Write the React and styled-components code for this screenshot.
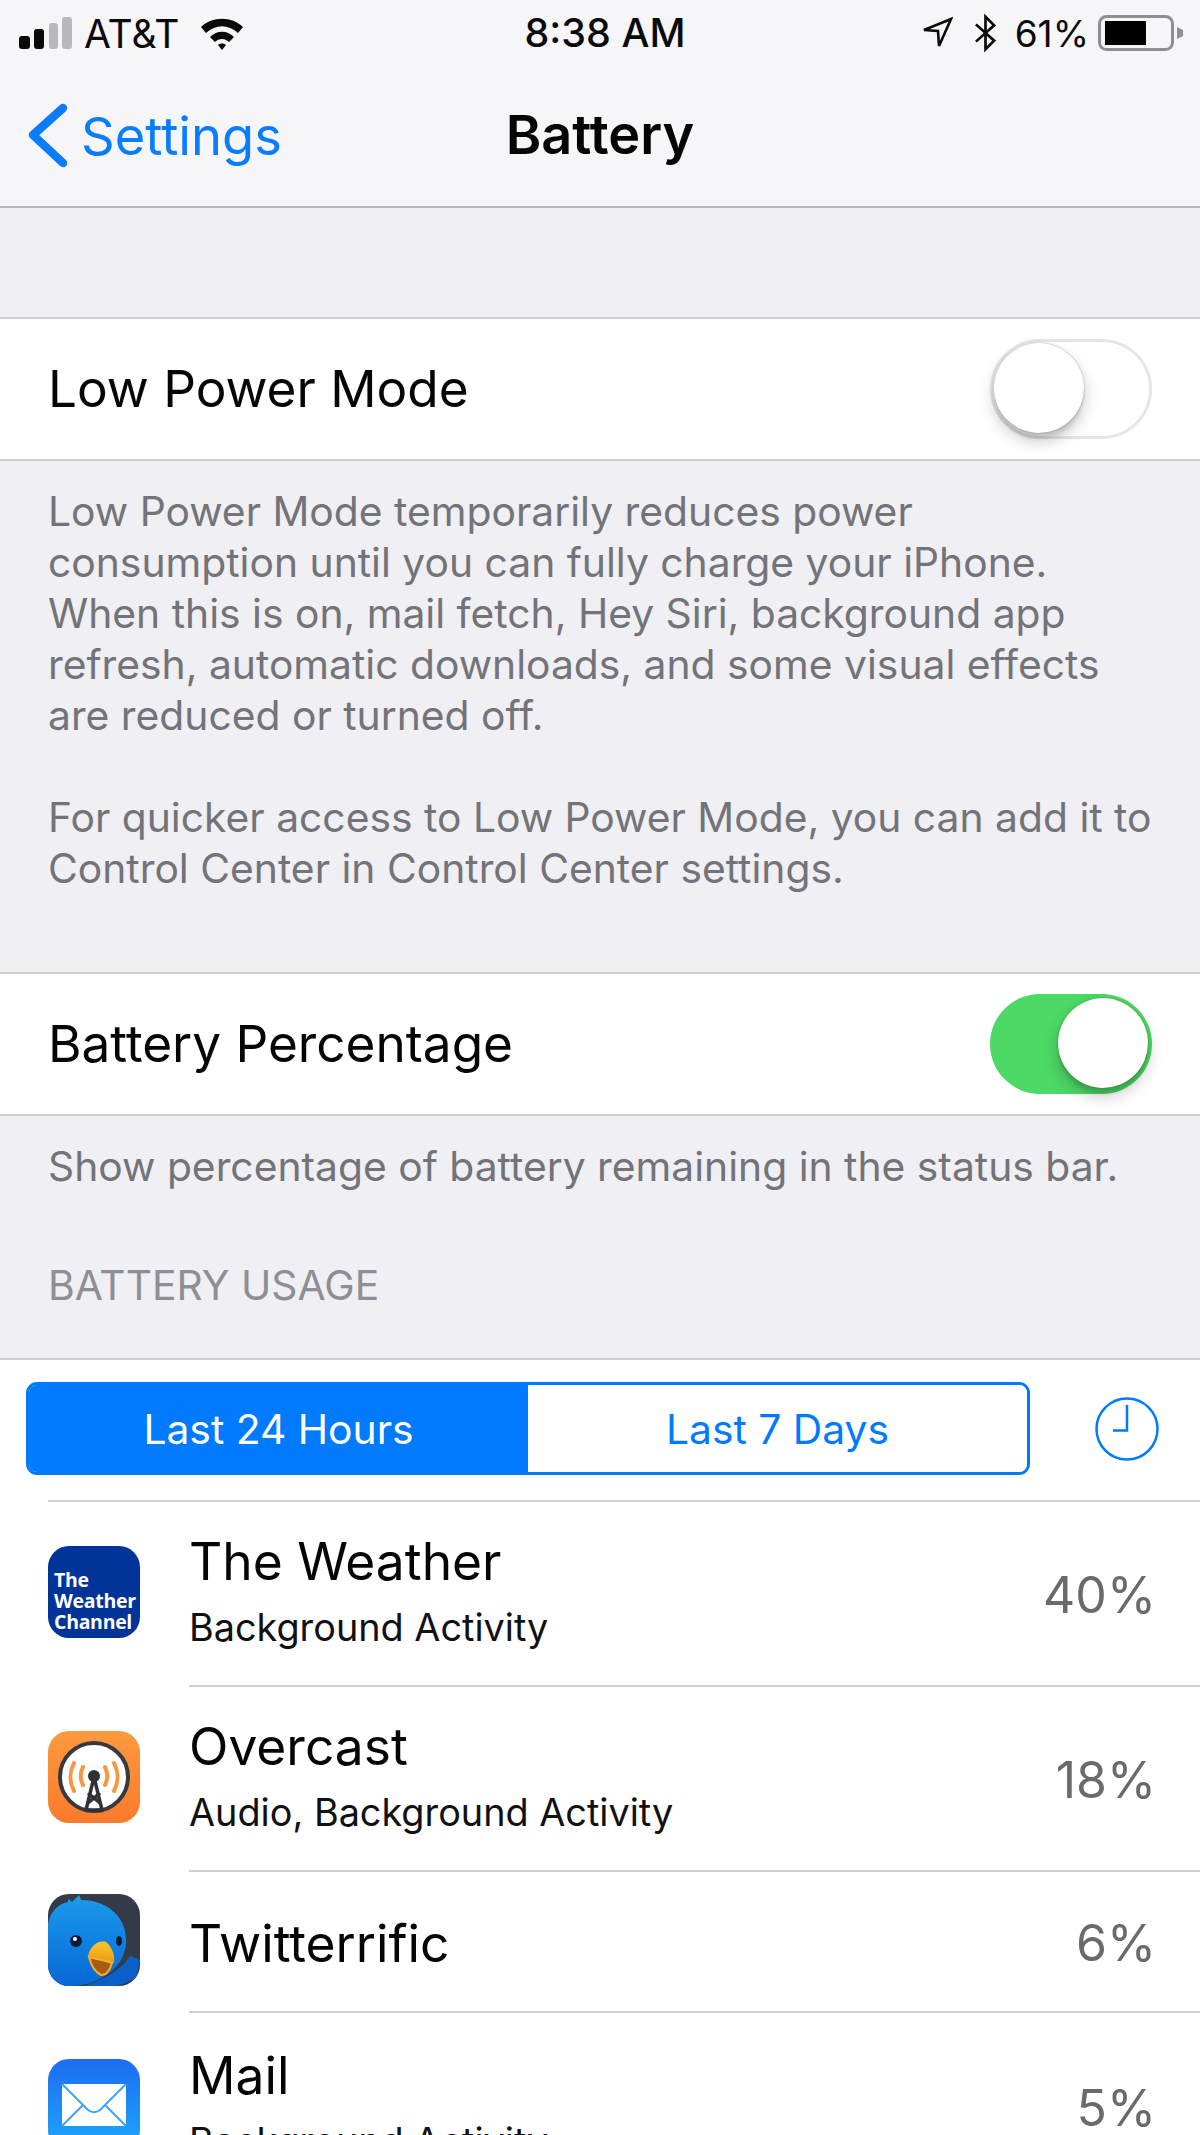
import React from 'react';
import styled, { createGlobalStyle } from 'styled-components';

const GlobalStyle = createGlobalStyle`
  html, body {
    margin: 0;
    padding: 0;
    background: #efeff4;
  }
  body {
    font-family: Inter, "Noto Sans", "Liberation Sans", sans-serif;
    -webkit-font-smoothing: antialiased;
  }
`;

const Page = styled.div`
  width: 1200px;
  height: 2135px;
  overflow: hidden;
  background: #efeff4;
`;

const Header = styled.header`
  height: 206px;
  background: #f6f6f8;
  border-bottom: 2px solid #b8b8bc;
`;

const StatusBar = styled.div`
  height: 66px;
  display: flex;
  align-items: center;
  justify-content: space-between;
  padding: 0 17px 0 19px;
  position: relative;
`;

const StatusSide = styled.div`
  display: flex;
  align-items: center;
  gap: ${p => p.$gap || 0}px;
`;

const StatusText = styled.span`
  font-size: ${p => p.$size}px;
  color: #0a0a0a;
`;

const Clock = styled.span`
  position: absolute;
  left: 10px;
  right: 0;
  text-align: center;
  font-size: 39.5px;
  font-weight: 500;
  color: #0a0a0a;
`;

const NavBar = styled.div`
  height: 140px;
  display: flex;
  align-items: center;
  padding-left: 23px;
  position: relative;
`;

const BackLink = styled.div`
  display: flex;
  align-items: center;
  gap: 12px;
  color: #0a7cff;
  font-size: 52.5px;
`;

const NavTitle = styled.div`
  position: absolute;
  left: 0;
  right: 0;
  top: 36px;
  text-align: center;
  font-size: 54px;
  font-weight: 600;
  color: #050505;
`;

const Group = styled.div`
  background: #fff;
  border-top: 2px solid #cfcfd3;
  border-bottom: 2px solid #cfcfd3;
  margin-top: ${p => p.$top}px;
`;

const Row = styled.div`
  height: 140px;
  display: flex;
  align-items: center;
  justify-content: space-between;
  padding: 0 48px;
`;

const RowLabel = styled.span`
  font-size: 51.3px;
  color: #050505;
  margin-bottom: 3px;
`;

const Track = styled.div`
  width: 162px;
  height: 100px;
  box-sizing: border-box;
  border-radius: 50px;
  position: relative;
  background: ${p => (p.$on ? '#4cd964' : '#fff')};
  border: ${p => (p.$on ? 'none' : '3px solid #e6e6e6')};
`;

const Knob = styled.div`
  position: absolute;
  top: ${p => (p.$on ? 4 : 1)}px;
  ${p => (p.$on ? 'right: 4px;' : 'left: 1px;')}
  width: 90px;
  height: 90px;
  border-radius: 50%;
  background: #fff;
  box-shadow: 0 0 2px rgba(0, 0, 0, 0.35), 0 8px 16px rgba(0, 0, 0, 0.22), 0 6px 3px rgba(0, 0, 0, 0.08);
`;

const Note = styled.div`
  padding: 25px 48px 0;
  font-size: 40.8px;
  line-height: 51px;
  color: #737378;
  white-space: nowrap;
`;

const NoteGap = styled.div`
  height: 51px;
`;

const SectionLabel = styled.div`
  padding: 0 48px;
  margin-top: 68px;
  font-size: 40.8px;
  line-height: 51px;
  color: #8e8e93;
`;

const Usage = styled.div`
  background: #fff;
  border-top: 2px solid #cfcfd3;
  margin-top: 47px;
  height: 800px;
`;

const SegmentBar = styled.div`
  display: flex;
  align-items: center;
  padding: 22px 0 0 26px;
`;

const Segments = styled.div`
  width: 1004px;
  height: 93px;
  box-sizing: border-box;
  display: flex;
  border: 3px solid #007aff;
  border-radius: 11px;
  overflow: hidden;
`;

const Segment = styled.div`
  flex: 1;
  display: flex;
  align-items: center;
  justify-content: center;
  font-size: 40.8px;
  background: ${p => (p.$active ? '#007aff' : '#fff')};
  color: ${p => (p.$active ? '#fff' : '#007aff')};
`;

const HistoryButton = styled.div`
  margin-left: 65px;
  display: flex;
`;

const AppRows = styled.div`
  margin: 25px 0 0 48px;
  border-top: 2px solid #cfcfd3;
`;

const AppRow = styled.div`
  height: ${p => p.$height}px;
  box-sizing: border-box;
  display: flex;
  align-items: center;
  padding-right: 44px;
  position: relative;
  &::after {
    content: '';
    position: absolute;
    left: 141px;
    right: 0;
    bottom: 0;
    height: 2px;
    background: #cfcfd3;
    display: ${p => (p.$last ? 'none' : 'block')};
  }
`;

const AppIcon = styled.div`
  width: 92px;
  height: 92px;
  border-radius: 21px;
  overflow: hidden;
  flex: none;
  display: flex;
  margin-bottom: 6px;
  background: ${p => p.$bg || 'transparent'};
`;

const WeatherLogo = styled.div`
  align-self: flex-end;
  padding: 0 0 6px 6px;
  font-family: "Open Sans", "Noto Sans", sans-serif;
  font-size: 19.5px;
  line-height: 21px;
  font-weight: 700;
  letter-spacing: -0.3px;
  color: #fff;
`;

const AppInfo = styled.div`
  flex: 1;
  margin-left: 49px;
`;

const AppName = styled.div`
  font-size: 51.5px;
  line-height: 60px;
  color: #050505;
`;

const AppDetail = styled.div`
  margin: 14px 0 9px;
  font-size: 37.8px;
  line-height: 44px;
  color: #111;
`;

const Percent = styled.div`
  font-size: 50px;
  color: #6a6a6e;
`;

const SignalIcon = () => (
  <svg width="53" height="34" viewBox="0 0 53 34">
    <rect x="0" y="20" width="11" height="13" rx="3" fill="#0a0a0a" />
    <rect x="15" y="13" width="10" height="20" rx="3" fill="#0a0a0a" />
    <rect x="30" y="7" width="9" height="26" rx="3" fill="#b9b9bb" />
    <rect x="43" y="1" width="10" height="32" rx="3" fill="#b9b9bb" />
  </svg>
);

const WifiIcon = () => (
  <svg width="44" height="34" viewBox="0 0 44 34">
    <path d="M1 11 C12 0 32 0 43 11 L38 17 C28 8 16 8 6 17Z" fill="#0a0a0a" />
    <path d="M10 21 C17 14 27 14 34 21 L29 26 C25 22 19 22 15 26Z" fill="#0a0a0a" />
    <path d="M18 29 C20 27 24 27 26 29 L22 34Z" fill="#0a0a0a" />
  </svg>
);

const LocationIcon = () => (
  <svg width="31" height="32" viewBox="0 0 31 32" fill="none">
    <path d="M2 13 L29 2 L17 29 L16 14Z" stroke="#0a0a0a" strokeWidth="2.6" strokeLinejoin="miter" />
  </svg>
);

const BluetoothIcon = () => (
  <svg width="23" height="38" viewBox="0 0 24 38" fill="none">
    <path d="M2 10 L21 27 L12 36 L12 2 L21 11 L2 28" stroke="#0a0a0a" strokeWidth="2.8" />
  </svg>
);

const BatteryIcon = () => (
  <svg width="85" height="36" viewBox="0 0 85 36">
    <rect x="1.5" y="1.5" width="73" height="33" rx="7" fill="none" stroke="#8f8f92" strokeWidth="3" />
    <rect x="7" y="6" width="41" height="24" fill="#000" />
    <path d="M79 12 L85 15 L85 21 L79 24Z" fill="#8f8f92" />
  </svg>
);

const BackChevron = () => (
  <svg width="46" height="68" viewBox="0 0 46 68" fill="none">
    <path d="M40 6 L10 33 L40 61" stroke="#0a7cff" strokeWidth="8.5" strokeLinecap="round" strokeLinejoin="round" />
  </svg>
);

const HistoryIcon = () => (
  <svg width="64" height="64" viewBox="0 0 64 64" fill="none">
    <circle cx="32" cy="32" r="30.5" stroke="#007aff" strokeWidth="2.5" />
    <path d="M32 8 V33.5 H18" stroke="#007aff" strokeWidth="2.5" />
  </svg>
);

const OvercastIcon = () => (
  <svg width="92" height="92" viewBox="0 0 92 92">
    <defs>
      <linearGradient id="overcastBg" x1="0" y1="0" x2="0" y2="1">
        <stop offset="0" stopColor="#fc9a3f" />
        <stop offset="1" stopColor="#fb7a2c" />
      </linearGradient>
    </defs>
    <rect width="92" height="92" fill="url(#overcastBg)" />
    <circle cx="46" cy="46" r="34" fill="#fff" stroke="#37393d" strokeWidth="4" />
    <path d="M26 32 C21 42 21 50 26 60 M66 32 C71 42 71 50 66 60" fill="none" stroke="#f8973f" strokeWidth="4" strokeLinecap="round" />
    <path d="M35 36 C32 42 32 48 35 54 M57 36 C60 42 60 48 57 54" fill="none" stroke="#f8973f" strokeWidth="4" strokeLinecap="round" />
    <path d="M46 46 L38 79 H54Z M40 72 L52 62 M52 72 L40 62" fill="none" stroke="#2f3136" strokeWidth="3.5" strokeLinejoin="round" />
    <circle cx="46" cy="45" r="6" fill="#2f3136" />
  </svg>
);

const BirdIcon = () => (
  <svg width="92" height="92" viewBox="0 0 92 92">
    <defs>
      <linearGradient id="birdBody" x1="0" y1="0" x2="0" y2="1">
        <stop offset="0" stopColor="#1a9bea" />
        <stop offset="1" stopColor="#0668d8" />
      </linearGradient>
      <linearGradient id="birdBeak" x1="0" y1="0" x2="0" y2="1">
        <stop offset="0" stopColor="#fbc52b" />
        <stop offset="1" stopColor="#ec9a12" />
      </linearGradient>
    </defs>
    <rect width="92" height="92" fill="#343a47" />
    <path d="M36 92 C50 88 72 78 82 62 L92 66 L88 84 L70 92Z" fill="#0a5fc8" />
    <path d="M20 5 L24 8 L31 1 L33 6 C60 6 80 24 78 50 C76 74 52 90 26 92 L0 92 L0 30 C2 18 10 10 20 8Z" fill="url(#birdBody)" />
    <circle cx="28" cy="47" r="6" fill="#0b1c3a" />
    <circle cx="27" cy="45" r="2" fill="#fff" />
    <ellipse cx="71" cy="47" rx="3" ry="5" fill="#0b1c3a" />
    <path d="M40 62 C42 52 50 46 58 48 C65 54 67 62 66 69 L40 62Z" fill="url(#birdBeak)" />
    <path d="M41 63 C48 65 58 67 64 69 C62 76 58 82 53 81 C47 78 43 71 41 63Z" fill="#a85b12" stroke="#f3b022" strokeWidth="2" />
  </svg>
);

const MailIcon = () => (
  <svg width="92" height="92" viewBox="0 0 92 92">
    <defs>
      <linearGradient id="mailBg" x1="0" y1="0" x2="0" y2="1">
        <stop offset="0" stopColor="#1d6cf2" />
        <stop offset="1" stopColor="#1ea9fb" />
      </linearGradient>
    </defs>
    <rect width="92" height="92" fill="url(#mailBg)" />
    <rect x="14" y="25" width="64" height="42" fill="#fff" />
    <path d="M14 25 L40 51 C44 54 48 54 52 51 L78 25 M14 67 L35 46 M78 67 L57 46" fill="none" stroke="#3fa3f3" strokeWidth="2" />
  </svg>
);

const apps = [
  { name: 'The Weather', detail: 'Background Activity', pct: '40%', height: 185, icon: <AppIcon $bg="#023399"><WeatherLogo>The<br />Weather<br />Channel</WeatherLogo></AppIcon> },
  { name: 'Overcast', detail: 'Audio, Background Activity', pct: '18%', height: 185, icon: <AppIcon><OvercastIcon /></AppIcon> },
  { name: 'Twitterrific', pct: '6%', height: 141, icon: <AppIcon><BirdIcon /></AppIcon> },
  { name: 'Mail', detail: 'Background Activity', pct: '5%', height: 190, last: true, icon: <AppIcon><MailIcon /></AppIcon> },
];

export default function App() {
  return (
    <Page>
      <GlobalStyle />
      <Header>
        <StatusBar>
          <StatusSide $gap={20}>
            <StatusSide $gap={12}>
              <SignalIcon />
              <StatusText $size={39}>AT&amp;T</StatusText>
            </StatusSide>
            <WifiIcon />
          </StatusSide>
          <Clock>8:38 AM</Clock>
          <StatusSide $gap={18}>
            <StatusSide $gap={21}>
              <LocationIcon />
              <BluetoothIcon />
            </StatusSide>
            <StatusSide $gap={9}>
              <StatusText $size={37}>61%</StatusText>
              <BatteryIcon />
            </StatusSide>
          </StatusSide>
        </StatusBar>
        <NavBar>
          <BackLink>
            <BackChevron />
            Settings
          </BackLink>
          <NavTitle>Battery</NavTitle>
        </NavBar>
      </Header>

      <Group $top={109}>
        <Row>
          <RowLabel>Low Power Mode</RowLabel>
          <Track><Knob /></Track>
        </Row>
      </Group>
      <Note>
        Low Power Mode temporarily reduces power<br />
        consumption until you can fully charge your iPhone.<br />
        When this is on, mail fetch, Hey Siri, background app<br />
        refresh, automatic downloads, and some visual effects<br />
        are reduced or turned off.
        <NoteGap />
        For quicker access to Low Power Mode, you can add it to<br />
        Control Center in Control Center settings.
      </Note>

      <Group $top={78}>
        <Row>
          <RowLabel>Battery Percentage</RowLabel>
          <Track $on><Knob $on /></Track>
        </Row>
      </Group>
      <Note>Show percentage of battery remaining in the status bar.</Note>
      <SectionLabel>BATTERY USAGE</SectionLabel>

      <Usage>
        <SegmentBar>
          <Segments>
            <Segment $active>Last 24 Hours</Segment>
            <Segment>Last 7 Days</Segment>
          </Segments>
          <HistoryButton><HistoryIcon /></HistoryButton>
        </SegmentBar>
        <AppRows>
          {apps.map(app => (
            <AppRow key={app.name} $height={app.height} $last={app.last}>
              {app.icon}
              <AppInfo>
                <AppName>{app.name}</AppName>
                {app.detail && <AppDetail>{app.detail}</AppDetail>}
              </AppInfo>
              <Percent>{app.pct}</Percent>
            </AppRow>
          ))}
        </AppRows>
      </Usage>
    </Page>
  );
}
